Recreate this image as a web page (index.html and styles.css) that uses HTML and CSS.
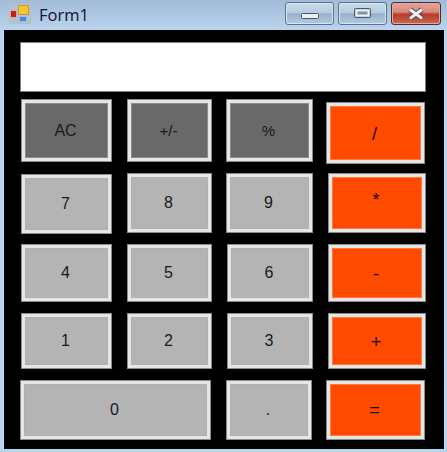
FILE: index.html
```html
<!DOCTYPE html>
<html lang="en">
<head>
    <meta charset="UTF-8">
    <title>Form1</title>
    <link rel="stylesheet" href="styles.css">
</head>
<body>

<!-- Title bar -->
<div class="titlebar">
    <svg class="app-icon" width="22" height="20" viewBox="0 0 22 20">
        <rect x="0.5" y="0.5" width="21" height="19" fill="#b0c4d6" stroke="#bcc0bc"/>
        <rect x="1.5" y="6.5" width="6" height="7" fill="#c4221c" stroke="#dca89e"/>
        <rect x="9.5" y="1.5" width="10" height="9" fill="#f6c62c" stroke="#c89a30"/>
        <rect x="10.5" y="12.5" width="7" height="5" fill="#4a86dc" stroke="#9cbce4"/>
    </svg>
    <span class="title">Form1</span>
    <div class="caption-buttons">
        <div class="caption-btn">
            <svg width="20" height="8" viewBox="0 0 20 8"><rect x="1.5" y="1.5" width="17" height="5" rx="1" fill="#eeeeee" stroke="#4c566a"/></svg>
        </div>
        <div class="caption-btn">
            <svg class="max-icon" width="20" height="12" viewBox="0 0 20 12"><rect x="1.5" y="1.5" width="16" height="9" rx="1" fill="#a8bccf" stroke="#4c566a"/><rect x="3.5" y="3.5" width="12" height="5" fill="#7f93ad" stroke="#eeeeee" stroke-width="2"/></svg>
        </div>
        <div class="caption-btn close">
            <svg width="20" height="14" viewBox="0 0 20 14"><path d="M4 2.5 L16 11.5 M16 2.5 L4 11.5" stroke="#4c4650" stroke-width="5"/><path d="M4 2.5 L16 11.5 M16 2.5 L4 11.5" stroke="#f0f0f0" stroke-width="3"/></svg>
        </div>
    </div>
</div>

<!-- Form content -->
<div class="client">
    <div class="display"></div>

    <div class="keypad">
        <button class="key dark col-1 tall">AC</button>
        <button class="key dark col-2 tall small">+/-</button>
        <button class="key dark col-3 tall small">%</button>
        <button class="key op op-wide down">/</button>

        <button class="key col-1 low">7</button>
        <button class="key col-2">8</button>
        <button class="key col-3">9</button>
        <button class="key op op-right up">*</button>

        <button class="key col-1 h58">4</button>
        <button class="key col-2 h58">5</button>
        <button class="key col-3 nudge h58">6</button>
        <button class="key op op-right h58 down">-</button>

        <button class="key col-1 h56">1</button>
        <button class="key col-2 h56">2</button>
        <button class="key col-3 nudge h56">3</button>
        <button class="key op op-right h56 down">+</button>

        <button class="key zero">0</button>
        <button class="key col-3 dot">.</button>
        <button class="key op equals">=</button>
    </div>
</div>

</body>
</html>
```

FILE: styles.css
```css
html, body {
    height: 100%;
}
body {
    margin: 0;
    display: flex;
    flex-direction: column;
    background-color: #b9d4ef;
    font-family: "Liberation Sans", Arial, sans-serif;
    overflow: hidden;
}
.titlebar {
    height: 30px;
    flex: none;
    display: flex;
    align-items: center;
    background: linear-gradient(to bottom, #a2bcd8, #bad4ee);
}
.app-icon {
    margin-left: 9px;
    margin-top: -2px;
}
.title {
    margin-left: 8px;
    margin-top: -1px;
    font-family: "Open Sans", sans-serif;
    font-size: 16.5px;
    color: #14102a;
}
.caption-buttons {
    margin-left: auto;
    margin-right: 6px;
    margin-top: -3px;
    display: flex;
    gap: 4px;
}
.caption-btn {
    width: 49px;
    height: 23px;
    box-sizing: border-box;
    display: flex;
    align-items: center;
    justify-content: center;
    border: 1px solid #5f7289;
    border-radius: 3px;
    background: linear-gradient(to bottom, #c9daea 0%, #b7cde2 45%, #94b2cf 52%, #b3cbe2 100%);
    box-shadow: inset 0 0 0 1px #d6e4f0;
}
.caption-btn svg {
    margin-top: 5px;
}
.caption-btn .max-icon {
    margin-top: -1px;
}
.caption-btn.close {
    width: 50px;
    border-color: #4d2a30;
    background: linear-gradient(to bottom, #e2a398 0%, #d98c7e 42%, #b83c28 55%, #c96a58 100%);
    box-shadow: inset 0 0 0 1px #e6a89c;
}
.caption-btn.close svg {
    margin-top: 0;
}
.client {
    height: 419px;
    margin: 0 3px 0 4px;
    padding: 12px 0 0 16px;
    box-sizing: border-box;
    background-color: #000;
}
.display {
    width: 406px;
    height: 50px;
    box-sizing: border-box;
    border: 1px solid #808080;
    background-color: #fff;
}
.keypad {
    margin-top: 7px;
    display: grid;
    grid-template-columns: 107px 99px 100px 100px;
    grid-template-rows: 74px 71px 69px 67px 60px;
}
.key {
    margin: 0;
    padding: 0 2px 0 0;
    box-sizing: border-box;
    height: 60px;
    border: 1px solid #8a8a8a;
    background-color: #b4b4b4;
    box-shadow: inset 0 0 0 3px #e6e6e6, inset 0 0 0 4px #b0b0b0;
    color: #18181e;
    font-family: inherit;
    font-size: 16px;
}
.dark {
    background-color: #696969;
    box-shadow: inset 0 0 0 3px #e6e6e6, inset 0 0 0 4px #8c8c8c;
}
.small {
    font-size: 15px;
}
.op {
    background-color: #ff4a00;
    box-shadow: inset 0 0 0 3px #e6e6e6, inset 0 0 0 4px #ff7a3c;
    color: #120a04;
    font-size: 18px;
}
.up {
    padding-bottom: 5px;
}
.down {
    padding-top: 2px;
}
.col-1 {
    margin-left: 1px;
    margin-right: 15px;
}
.col-2 {
    margin-right: 14px;
}
.col-3 {
    margin-right: 13px;
}
.tall {
    height: 63px;
}
.low {
    margin-top: 1px;
}
.h58 {
    height: 58px;
}
.h56 {
    height: 56px;
}
.nudge {
    margin-left: 1px;
}
.op-wide {
    margin-top: 3px;
    margin-right: 1px;
    height: 62px;
}
.op-right {
    margin-left: 2px;
}
.equals {
    margin-right: 1px;
}
.zero {
    grid-column: span 2;
    margin-right: 15px;
}
.dot {
    margin-right: 14px;
}
```
